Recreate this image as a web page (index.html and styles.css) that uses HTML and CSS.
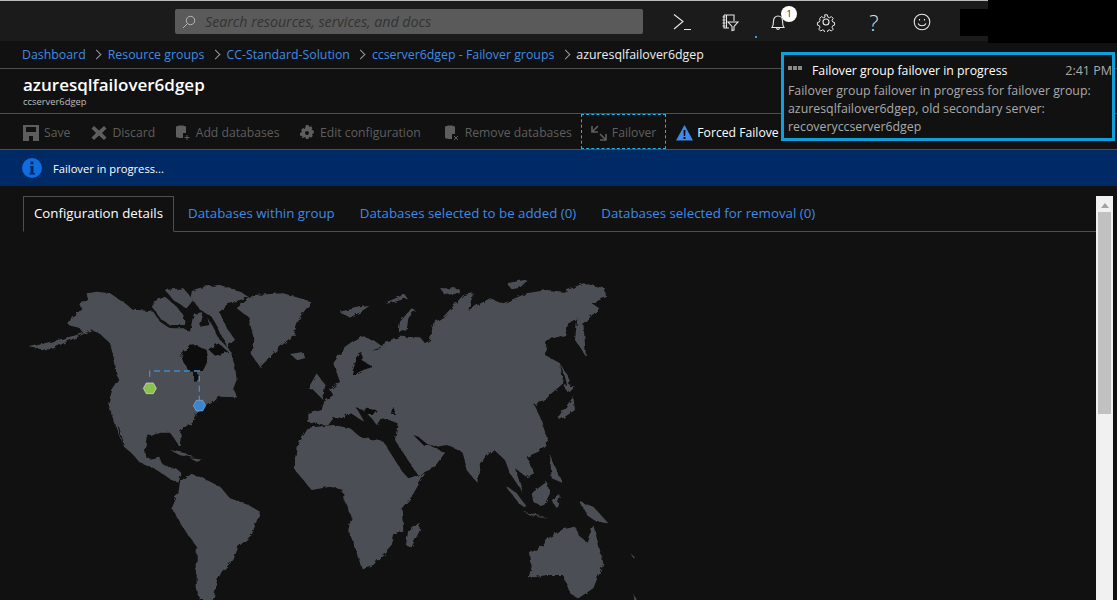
FILE: index.html
```html
<!DOCTYPE html>
<html lang="en">
<head>
  <meta charset="UTF-8">
  <title>azuresqlfailover6dgep</title>
  <link rel="stylesheet" href="styles.css">
</head>
<body>

  <!-- Top bar -->
  <header class="topbar">
    <div class="search">
      <svg class="search-icon" width="14" height="14" viewBox="0 0 14 14"><circle cx="8.5" cy="5.5" r="4.2"/><path d="M5.5 8.5L1 13"/></svg>
      <span>Search resources, services, and docs</span>
    </div>
    <nav class="top-icons">
      <div class="top-icon">
        <svg width="22" height="22" viewBox="0 0 22 22"><path d="M3 3.500l9 7-9 7.500M13 18.500h7"/></svg>
      </div>
      <div class="top-icon">
        <svg width="20" height="20" viewBox="0 0 20 20"><path d="M4 3h10v6M4 3v13h5M6.500 3v13M2.500 5h3M2.500 8h3M2.500 11h3M2.500 14h3M8 10h10l-4 4.500V18l-2 .5v-4z"/></svg>
      </div>
      <div class="top-icon">
        <svg width="20" height="20" viewBox="0 0 20 20"><path d="M4 15.500c1.500-2 1.500-4 1.500-6.500 0-3 2-5 4.500-5s4.500 2 4.500 5c0 2.500 0 4.500 1.500 6.500zM8.500 15.500c0 2.500 3 2.500 3 0"/></svg>
        <span class="badge">1</span>
      </div>
      <div class="top-icon">
        <svg width="20" height="20" viewBox="0 0 20 20"><circle cx="10" cy="10" r="3"/><path d="M8.500 2h3l.5 2.500 1.800.8 2.200-1.300 2 2-1.300 2.200.8 1.800 2 .5v3l-2 .5-.8 1.800 1.300 2.200-2 2-2.200-1.300-1.800.8-.5 2.500h-3l-.5-2.500-1.800-.8-2.200 1.300-2-2 1.300-2.200-.8-1.800-2-.5v-3l2-.5.8-1.800L3 6l2-2 2.200 1.300 1.800-.8z" transform="translate(1 1) scale(.9)"/></svg>
      </div>
      <div class="top-icon help">?</div>
      <div class="top-icon">
        <svg width="20" height="20" viewBox="0 0 20 20"><circle cx="10" cy="10" r="7.800"/><path d="M6 11.500c1.500 3 6.500 3 8 0M7.500 7v1.500M12.500 7v1.500"/></svg>
      </div>
    </nav>
    <span class="activity-dot"></span>
  </header>
  <div class="redact-top"></div>
  <div class="redact-low"></div>

  <!-- Breadcrumb -->
  <div class="breadcrumb">
    <a>Dashboard</a><i></i>
    <a>Resource groups</a><i></i>
    <a>CC-Standard-Solution</a><i></i>
    <a>ccserver6dgep - Failover groups</a><i></i>
    <b>azuresqlfailover6dgep</b>
  </div>

  <!-- Title -->
  <div class="title-row">
    <h1>azuresqlfailover6dgep</h1>
    <div class="subtitle">ccserver6dgep</div>
  </div>

  <!-- Command bar -->
  <div class="toolbar">
    <div class="tool">
      <svg width="16" height="16" viewBox="0 0 16 16"><path class="solid" fill-rule="evenodd" d="M0 0h16v16H0zM3 2v5h10V2zM6 11v5h4v-5z"/></svg>
      Save
    </div>
    <div class="tool tool-near">
      <svg width="16" height="16" viewBox="0 0 16 16"><path class="solid" d="M3 1l5 4.500L13 1l2.500 2.500L11 8l4.500 4.500L13 15l-5-4.500L3 15 .5 12.500 5 8 .5 3.500z"/></svg>
      Discard
    </div>
    <div class="tool tool-near">
      <svg width="16" height="16" viewBox="0 0 16 16"><path class="solid" d="M1 2c0-2 10-2 10 0v6H8v5H7c-3 0-6-.5-6-1.500z"/><path class="thin" d="M12 10v5M9.500 12.500h5"/></svg>
      Add databases
    </div>
    <div class="tool tool-far">
      <svg width="16" height="16" viewBox="0 0 16 16"><path class="solid" fill-rule="evenodd" d="M7 0h2.500l.5 2 2-.8 1.500 1.800-1 1.800 2 .7.500 2.500-2 1 .8 2-1.800 1.800-1.800-1-.8 2.200H7l-.7-2-2 .8L2.500 13l1-1.800-2.500-.7V8l2-1-.8-2L4 3l1.800 1zM8 6a2 2 0 100 4 2 2 0 000-4z"/></svg>
      Edit configuration
    </div>
    <div class="tool">
      <svg width="16" height="16" viewBox="0 0 16 16"><path class="solid" d="M1 2c0-2 10-2 10 0v7H8v5H7c-3 0-6-.5-6-1.500z"/><path class="thin" d="M10 11l4 4M14 11l-4 4"/></svg>
      Remove databases
    </div>
    <div class="tool tool-focus">
      <svg width="16" height="16" viewBox="0 0 16 16"><path class="arrows" d="M1 1v6h6M1 7l6-6M15 9v6H9M15 15L9 9"/></svg>
      Failover
    </div>
    <div class="tool tool-active">
      <svg width="17" height="16" viewBox="0 0 17 16"><path class="warn" d="M8.500 0L17 15.500H0z"/><path class="warn-mark" d="M7.500 5h2l-.3 6H7.800zM7.500 12h2v2h-2z"/></svg>
      Forced Failove
    </div>
  </div>

  <!-- Status banner -->
  <div class="banner">
    <svg width="20" height="20" viewBox="0 0 20 20"><circle cx="10" cy="10" r="10" fill="#0f6de0"/><path d="M8.500 3.500h3v3h-3zM8 8h3.500v7H13v1.500H7.500V15H8.500V9.500H8z" fill="#002a66"/></svg>
    <span>Failover in progress...</span>
  </div>

  <!-- Main content -->
  <main class="main">
    <div class="content">
      <div class="tabs">
        <div class="tab tab-selected">Configuration details</div>
        <div class="tab">Databases within group</div>
        <div class="tab">Databases selected to be added (0)</div>
        <div class="tab">Databases selected for removal (0)</div>
      </div>

      <svg class="map" viewBox="66 0 1974 1020" width="658" height="340">
        <filter id="rough" x="-2%" y="-2%" width="104%" height="104%">
          <feTurbulence type="fractalNoise" baseFrequency="0.06" numOctaves="2" seed="4"/>
          <feDisplacementMap in="SourceGraphic" scale="14"/>
        </filter>
        <g class="land" filter="url(#rough)">
          <!-- North America -->
          <path d="M88 262L125 268 155 268 200 245 245 225 275 210 300 222 330 250 345 310 350 345 358 360 335 395 325 430 335 465 355 515 372 560 395 580 420 608 470 630 515 660 535 668 545 640 528 625 505 620 485 610 478 590 440 598 435 570 440 530 465 518 510 518 530 545 540 565 545 540 540 515 580 480 590 455 625 430 660 410 712 412 700 385 710 360 705 320 690 270 655 235 625 175 630 195 600 200 610 160 580 165 570 215 550 205 510 205 480 185 460 155 420 150 400 150 375 130 330 100 290 95 260 100 265 125 235 130 245 150 215 170 205 195 240 205 250 220z"/>
          <path d="M610 80L660 75 720 95 745 110 720 120 680 130 660 160 675 195 705 240 680 260 655 205 635 170 600 150 575 115 580 90z"/>
          <path d="M495 90L550 85 580 120 560 145 520 120z"/>
          <path d="M460 125L495 110 530 140 550 165 555 195 510 195 480 175 460 145z"/>
          <path d="M710 145l50-40 90-5 85 25-35 45-20 55-50 45-50 52-25-37 5-55-15-60z"/>
          <path d="M870 282l38-6 8 18-24 7z"/>
          <!-- South America and Caribbean -->
          <path d="M540 665l30-25 40 15 50 25 30 35 55 20 35 20-25 70-40 35-15 40-35 35-15 30-15 55h-35l-10-35 0-125-40-55-35-60 20-45z"/>
          <path d="M510 570l40 8 35 15-45-7zM570 595l40 4-20 6z"/>
          <!-- Africa -->
          <path d="M885 600l5-40 35-57 75-8 50 10 30 25 70 15 55 87 20 23 50-15-40 70-30 35 5 65-30 12-10 38-50 55-35 10-20-65-20-50 10-40-25-55 0-25-40-10-55 10-50-60z"/>
          <!-- Eurasia -->
          <path d="M925 488l0-26 40-12 7-25 28-20-10-15 30-25-20-55 35-50 45-32 40 12 30 22 5-17 45-15 60 2 15 18 15-10 10-50 30-20 60-65 30-5-15 50 65-35 40 15 70-30 60-10 50 5 60-25 65 15 3 27-43 18 23 15-48 45 8 100-33-50 7-65-27 15-10 35-55 15-5 45 45 25 10 60-35 30-25 25-30 7 20 38 10 30 15 45-30 30-35 15 22 50-22 12-35-27 25 75-40-60-15-40-35-32-40 42-8 58-32-38-15-55-45-20-30 5-35-10 60 28-35 47-47 20-23-35-45-70 8-50-48-18-15 23-15-20-25-25-20-5 23 40-18-10-25-18-25 18-25 0-15 20z"/>
          <!-- Islands -->
          <path d="M925 385l25-45 25 35-5 45-30-30z"/>
          <path d="M1018 155l70-15 20-2-30 20-30 15zM1155 128l60-25 5 12-50 15zM1320 85l55 0 5 15-45 5zM1520 70l65-12-25 25-25 5z"/>
          <path d="M1235 145l10 5-20 25-5 35-25 10 5-35z"/>
          <path d="M1680 310l30 50-5 30-10-40zM1690 375l35 5-20 20zM1675 470l45-60 5 40-45 30z"/>
          <path d="M1650 585l20 45 20 40-35-15zM1595 700l45-35 10 35-20 40-30-15zM1515 675l35 25 30 40-20-5zM1570 755l80 20-60-10zM1655 720l25-15-10 40z"/>
          <path d="M1740 725l40 15 45 50-35-5-30-20z"/>
          <path d="M1590 880l40-25 15-20 35-25 45-10 15 30 20 15 20-50 30 115-30 75-45 30-25-15-20-55-50 0-55 10 10-35z"/>
          <path d="M1255 785l5 25-25 50-17-5 7-45z"/>
          <path d="M1890 880l15 12-5 3zM1900 1000l8 20-5 0z"/>
        </g>
        <g class="sea" filter="url(#rough)">
          <!-- Hudson Bay, Baltic, Black Sea, Gulf -->
          <path d="M545 285l20-27 25-3 30 15 5 30-15 30-15 5-5 30-8 0 0-30-15 0-22-40z"/>
          <path d="M625 268l30-18 30 25-40 12z"/>
          <path d="M1075 280l10-5 0 25 35 20-30 10-25 12-10 0 10-30z"/>
          <path d="M1090 445l40 5-10 12-25 0zM1180 440l8 25-12 0zM1240 525l15 5 30 25-15 0z"/>
          <path class="slit" d="M1170 180l30 40M1120 270l25-5M355 500l17 55"/>
        </g>
        <path class="link" d="M449 350V333H598V420"/>
        <path class="node-green" d="M430 385l9-16h21l9 16-9 16h-21z"/>
        <path class="node-blue" d="M580 437l9-16h19l9 16-9 16h-19z"/>
      </svg>
    </div>
    <div class="scrollbar">
      <span class="arrow-up"></span>
      <span class="thumb"></span>
    </div>
  </main>

  <!-- Notification toast -->
  <div class="toast">
    <div class="toast-head">
      <span class="dots"><i></i><i></i><i></i></span>
      <strong>Failover group failover in progress</strong>
      <time>2:41 PM</time>
    </div>
    <p>Failover group failover in progress for failover group: azuresqlfailover6dgep, old secondary server: recoveryccserver6dgep</p>
  </div>

</body>
</html>
```

FILE: styles.css
```css
* {
  box-sizing: border-box;
}

html, body {
  height: 600px;
  overflow: hidden;
}

body {
  margin: 0;
  position: relative;
  background-color: #111;
  color: #fff;
  font-family: "Open Sans", "Noto Sans", sans-serif;
  font-size: 12px;
}

/* Top bar */
.topbar {
  position: relative;
  height: 41px;
  display: flex;
  align-items: flex-start;
  padding: 8px 0 0 175px;
  background-color: #1b1b1b;
  border-top: 1px solid #bbb;
}

.search {
  width: 468px;
  height: 25px;
  display: flex;
  align-items: center;
  gap: 9px;
  padding-left: 7px;
  background-color: #5a5a5a;
  border-radius: 2px;
  color: #333;
  font-size: 14.200px;
  font-style: italic;
}

.search-icon {
  fill: none;
  stroke: #b5b5b5;
  stroke-width: 1;
}

.top-icons {
  display: flex;
  margin-left: 15px;
}

.top-icon {
  position: relative;
  width: 48px;
  height: 26px;
  display: flex;
  align-items: center;
  justify-content: center;
}

.top-icon svg {
  fill: none;
  stroke: #e8e8e8;
  stroke-width: 1.1;
}

.help {
  font-size: 22px;
  font-weight: 300;
  color: #ddd;
}

.badge {
  position: absolute;
  left: 27px;
  top: -3px;
  width: 16px;
  height: 16px;
  border-radius: 50%;
  background-color: #fff;
  color: #222;
  font-size: 9px;
  line-height: 16px;
  text-align: center;
}

.activity-dot {
  position: absolute;
  left: 755px;
  top: 35px;
  width: 2px;
  height: 2px;
  background-color: #1ea7e8;
}

.redact-top {
  position: absolute;
  left: 988px;
  top: 0;
  width: 129px;
  height: 43px;
  background-color: #000;
}

.redact-low {
  position: absolute;
  left: 960px;
  top: 9px;
  width: 157px;
  height: 27px;
  background-color: #000;
}

/* Breadcrumb */
.breadcrumb {
  height: 28px;
  display: flex;
  align-items: center;
  padding: 0 22px;
  border-bottom: 1px solid #4f4f4f;
  font-size: 12.350px;
}

.breadcrumb a {
  color: #3f8ae6;
}

.breadcrumb i {
  width: 22px;
  display: flex;
  justify-content: center;
}

.breadcrumb i::before {
  content: "";
  width: 6px;
  height: 6px;
  border-top: 1px solid #999;
  border-right: 1px solid #999;
  transform: rotate(45deg);
}

.breadcrumb b {
  font-weight: 400;
  color: #eee;
}

/* Title */
.title-row {
  height: 45px;
  padding: 5px 23px 0;
  border-bottom: 1px solid #4f4f4f;
}

h1 {
  margin: 0;
  font-size: 17px;
  line-height: 22px;
  font-weight: 600;
}

.subtitle {
  font-size: 9.400px;
  line-height: 12px;
  color: #bbb;
}

/* Command bar */
.toolbar {
  height: 36px;
  display: flex;
  align-items: stretch;
  padding-left: 23px;
  border-bottom: 1px solid #4f4f4f;
  white-space: nowrap;
  overflow: hidden;
}

.tool {
  display: flex;
  align-items: center;
  gap: 5px;
  margin-right: 21px;
  padding-top: 2px;
  color: #5e5e5e;
  font-size: 12.200px;
}

.tool svg {
  flex: none;
}

.tool-near {
  margin-right: 19.500px;
}

.tool-far {
  margin-right: 23px;
}

.tool .solid {
  fill: #5e5e5e;
}

.tool .thin {
  fill: none;
  stroke: #5e5e5e;
}

.tool .arrows {
  fill: none;
  stroke: #5e5e5e;
  stroke-width: 1.600;
}

.tool-focus {
  margin: 0 10px 0 -12px;
  padding: 2px 9px 0;
  border: 1px dashed #19b6ee;
}

.tool-active {
  gap: 4px;
  margin-right: 0;
  color: #fff;
}

.warn {
  fill: #3f8ae6;
}

.warn-mark {
  fill: #111;
}

/* Banner */
.banner {
  height: 36px;
  display: flex;
  align-items: center;
  gap: 11px;
  padding-left: 22px;
  background-color: #002a66;
  font-size: 11.200px;
}

/* Main */
.main {
  display: flex;
  padding: 10px 4px 0 23px;
  height: 414px;
}

.content {
  flex: 1;
  min-width: 0;
}

.tabs {
  height: 36px;
  display: flex;
  gap: 25px;
  border-bottom: 1px solid #4f4f4f;
}

.tab {
  height: 36px;
  line-height: 34px;
  color: #3f8ae6;
  font-size: 13.300px;
}

.tab-selected {
  width: 151px;
  margin-right: -11px;
  border: 1px solid #4f4f4f;
  border-bottom-color: #111;
  color: #fff;
  line-height: 32px;
  text-align: center;
}

/* Map */
.map {
  display: block;
  margin: 28px 0 0 -1px;
}

.land {
  fill: #4c4f54;
}

.sea {
  fill: #111;
}

.slit {
  fill: none;
  stroke: #111;
  stroke-width: 3;
}

.link {
  fill: none;
  stroke: #3d8ccc;
  stroke-width: 4;
  stroke-dasharray: 18 12;
}

.node-green {
  fill: #8cc152;
  stroke: #d8e8c8;
  stroke-width: 2;
}

.node-blue {
  fill: #3b86cc;
  stroke: #9cc4e8;
  stroke-width: 1.500;
}

/* Scrollbar */
.scrollbar {
  width: 17px;
  flex: none;
  display: flex;
  flex-direction: column;
  align-items: center;
  background-color: #f1f1f1;
}

.arrow-up {
  margin: 7px 0 4px;
  width: 0;
  height: 0;
  border-left: 4px solid transparent;
  border-right: 4px solid transparent;
  border-bottom: 5px solid #a3a3a3;
}

.thumb {
  width: 13px;
  height: 202px;
  background-color: #c1c1c1;
}

/* Toast */
.toast {
  position: absolute;
  left: 781px;
  top: 52px;
  width: 334px;
  height: 89px;
  padding: 5px 0 0 4px;
  background-color: #111;
  border: 3px solid #0ea0dc;
}

.toast-head {
  display: flex;
  align-items: center;
  height: 20px;
}

.dots {
  display: flex;
  gap: 1px;
  width: 24px;
  margin-bottom: 4px;
}

.dots i {
  width: 4px;
  height: 4px;
  background-color: #888;
}

.toast-head strong {
  flex: 1;
  font-weight: 400;
  font-size: 12.300px;
}

.toast-head time {
  color: #aaa;
  font-size: 12.500px;
}

.toast p {
  margin: 2px 0 0;
  width: 320px;
  color: #aaa;
  font-size: 12.350px;
  line-height: 18px;
}
```
